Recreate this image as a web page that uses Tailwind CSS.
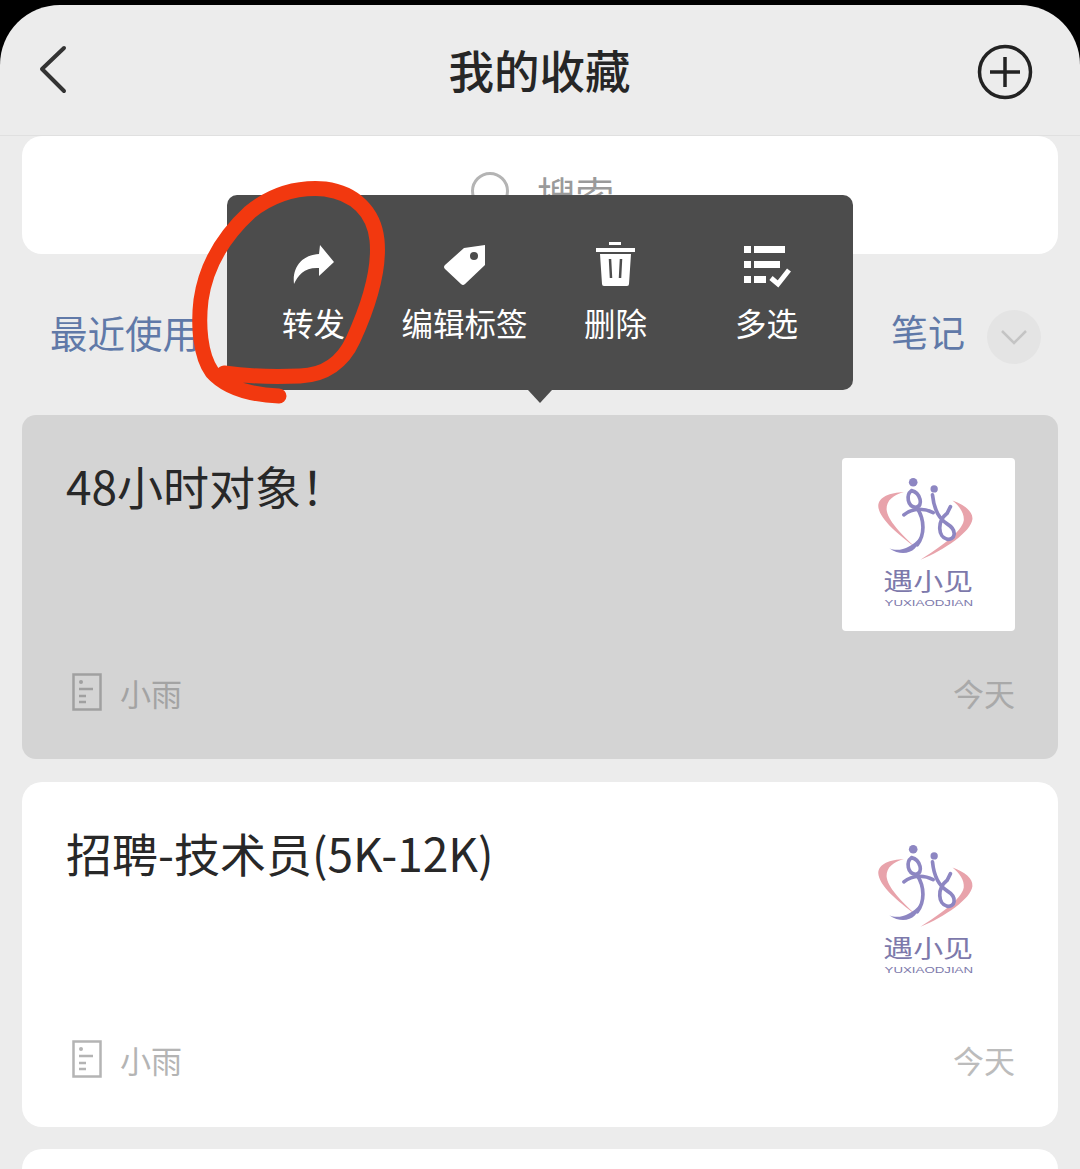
<!DOCTYPE html>
<html lang="zh-CN">

<head>
  <meta charset="UTF-8" />
  <title>我的收藏</title>
  <script src="https://cdn.jsdelivr.net/npm/@tailwindcss/browser@4"></script>
</head>

<body class="bg-black font-['Noto_Sans_CJK_SC','Noto_Sans',sans-serif]">
  <div class="relative w-[1080px] h-[1169px] overflow-hidden bg-black pt-[5px]">
    <div class="h-[1164px] rounded-t-[60px] bg-[#ececec] overflow-hidden">

      <!-- header -->
      <header class="h-[131px] grid grid-cols-[1fr_auto_1fr] items-center pl-[38px] pr-[47px] border-b border-[#e0e0e0]">
        <svg class="w-[32px] h-[50px]" viewBox="0 0 32 50" fill="none" stroke="#333" stroke-width="4" stroke-linecap="round" stroke-linejoin="round">
          <path d="M26 3 L4 24 L26 46" />
        </svg>
        <h1 class="text-[45.5px] leading-none font-medium text-[#262626] translate-x-[4px]">我的收藏</h1>
        <svg class="w-[56px] h-[56px] justify-self-end mt-[3px]" viewBox="0 0 56 56" fill="none" stroke="#222" stroke-width="3.5">
          <circle cx="28" cy="28" r="25.5" />
          <path d="M13 28 H43 M28 13 V43" />
        </svg>
      </header>

      <main class="px-[22px]">
        <!-- search -->
        <div class="h-[118px] bg-white rounded-[20px] flex justify-center gap-[28px] pt-[32px] pl-[5px]">
          <div class="w-[38px] h-[38px] rounded-full border-[3px] border-[#b4b4b4] mt-[4px]"></div>
          <span class="text-[38.5px] leading-[50px] text-[#9a9a9a]">搜索</span>
        </div>

        <!-- tabs -->
        <div class="h-[161px] flex items-center justify-between pl-[28px] pr-[17px] pt-[4px]">
          <span class="text-[37.5px] leading-none text-[#6079a8] mb-[10px]">最近使用</span>
          <div class="flex items-center gap-[22px]">
            <span class="text-[37px] leading-none text-[#6079a8] mb-[10px]">笔记</span>
            <div class="w-[54px] h-[54px] rounded-full bg-[#e4e4e4] flex items-center justify-center">
              <svg class="w-[30px] h-[18px]" viewBox="0 0 30 18" fill="none" stroke="#c4c4c4" stroke-width="2.5">
                <path d="M3 3 L15 15 L27 3" />
              </svg>
            </div>
          </div>
        </div>

        <!-- card 1 (pressed) -->
        <article class="h-[344px] rounded-[14px] bg-[#d4d4d4] pt-[43px] pl-[44px] pr-[43px] mb-[23px]">
          <div class="h-[173px] flex justify-between">
            <h2 class="text-[46px] leading-[54px] text-[#282828]">48小时对象！</h2>
            <div class="w-[173px] h-[173px] bg-white rounded-[4px]">
              <svg class="w-full h-full" viewBox="36 24 520 520">
                <path d="M222 126 C180 128 146 140 145 168 C146 205 205 255 257 292 C215 255 172 210 170 178 C170 150 190 136 222 126Z" fill="#e8a3ab" />
                <path d="M368 152 C405 165 430 185 428 208 C424 245 345 300 272 330 C325 295 395 250 402 212 C404 190 390 170 368 152Z" fill="#e8a3ab" />
                <circle cx="250" cy="97" r="13" fill="#8d86c2" />
                <circle cx="313" cy="117" r="11" fill="#8d86c2" />
                <g fill="none" stroke="#8d86c2" stroke-width="11" stroke-linecap="round">
                  <path d="M245 122 C228 135 232 170 258 172 C282 170 272 128 245 122Z" />
                  <path d="M222 195 C250 172 285 175 310 188" />
                  <path d="M262 175 C285 210 285 255 262 285" />
                  <path d="M308 135 C312 175 325 205 352 222 C385 242 375 272 352 268 C325 262 320 215 352 190 L362 170" />
                </g>
                <path d="M178 295 C205 308 245 295 270 262 C268 300 225 328 178 295Z" fill="#8d86c2" />
                <text x="295" y="422" text-anchor="middle" font-size="72" textLength="270" lengthAdjust="spacingAndGlyphs" fill="#7d79ab">遇小见</text>
                <text x="297" y="470" text-anchor="middle" font-size="29" textLength="266" lengthAdjust="spacingAndGlyphs" fill="#7d79ab" font-family="Liberation Sans">YUXIAODJIAN</text>
              </svg>
            </div>
          </div>
          <div class="mt-[42px] flex items-center justify-between">
            <div class="flex items-center gap-[18px] pl-[6px]">
              <svg class="w-[30px] h-[38px]" viewBox="0 0 30 38" fill="none" stroke="#a0a0a0" stroke-width="2.5">
                <rect x="1.5" y="1.5" width="27" height="35" />
                <circle cx="9" cy="9" r="2" fill="#a0a0a0" stroke="none" />
                <path d="M7 16 H21 M7 23 H14 M7 29 H14" />
              </svg>
              <span class="text-[31px] leading-none text-[#a3a3a3]">小雨</span>
            </div>
            <span class="text-[31px] leading-none text-[#a9a9a9]">今天</span>
          </div>
        </article>

        <!-- card 2 -->
        <article class="h-[345px] rounded-[20px] bg-white pt-[43px] pl-[44px] pr-[43px] mb-[22px]">
          <div class="h-[173px] flex justify-between">
            <h2 class="text-[46px] leading-[54px] text-[#282828]">招聘-技术员(5K-12K)</h2>
            <div class="w-[173px] h-[173px] bg-white">
              <svg class="w-full h-full" viewBox="36 24 520 520">
                <path d="M222 126 C180 128 146 140 145 168 C146 205 205 255 257 292 C215 255 172 210 170 178 C170 150 190 136 222 126Z" fill="#e8a3ab" />
                <path d="M368 152 C405 165 430 185 428 208 C424 245 345 300 272 330 C325 295 395 250 402 212 C404 190 390 170 368 152Z" fill="#e8a3ab" />
                <circle cx="250" cy="97" r="13" fill="#8d86c2" />
                <circle cx="313" cy="117" r="11" fill="#8d86c2" />
                <g fill="none" stroke="#8d86c2" stroke-width="11" stroke-linecap="round">
                  <path d="M245 122 C228 135 232 170 258 172 C282 170 272 128 245 122Z" />
                  <path d="M222 195 C250 172 285 175 310 188" />
                  <path d="M262 175 C285 210 285 255 262 285" />
                  <path d="M308 135 C312 175 325 205 352 222 C385 242 375 272 352 268 C325 262 320 215 352 190 L362 170" />
                </g>
                <path d="M178 295 C205 308 245 295 270 262 C268 300 225 328 178 295Z" fill="#8d86c2" />
                <text x="295" y="422" text-anchor="middle" font-size="72" textLength="270" lengthAdjust="spacingAndGlyphs" fill="#7d79ab">遇小见</text>
                <text x="297" y="470" text-anchor="middle" font-size="29" textLength="266" lengthAdjust="spacingAndGlyphs" fill="#7d79ab" font-family="Liberation Sans">YUXIAODJIAN</text>
              </svg>
            </div>
          </div>
          <div class="mt-[42px] flex items-center justify-between">
            <div class="flex items-center gap-[18px] pl-[6px]">
              <svg class="w-[30px] h-[38px]" viewBox="0 0 30 38" fill="none" stroke="#b4b4b4" stroke-width="2.5">
                <rect x="1.5" y="1.5" width="27" height="35" />
                <circle cx="9" cy="9" r="2" fill="#b4b4b4" stroke="none" />
                <path d="M7 16 H21 M7 23 H14 M7 29 H14" />
              </svg>
              <span class="text-[31px] leading-none text-[#b4b4b4]">小雨</span>
            </div>
            <span class="text-[31px] leading-none text-[#bcbcbc]">今天</span>
          </div>
        </article>

        <!-- card 3, cut off by the screen edge -->
        <article class="h-[200px] rounded-[20px] bg-white"></article>
      </main>
    </div>

    <!-- long-press menu -->
    <div class="absolute left-[227px] top-[195px] w-[626px] h-[195px] rounded-[10px] bg-[#4c4c4c] pl-[11px] grid grid-cols-[repeat(4,151px)] text-white">
      <div class="flex flex-col items-center pt-[46px]">
        <svg class="w-[48px] h-[48px]" viewBox="290 242 48 48" fill="#fff">
          <path d="M320 246 L334 263 L319 277 L319 269 C305 268 298 276 294 285 C292 268 302 256 319 255 Z" />
        </svg>
        <span class="text-[31.5px] leading-none mt-[18px]">转发</span>
      </div>
      <div class="flex flex-col items-center pt-[46px]">
        <svg class="w-[48px] h-[48px]" viewBox="441 242 48 48" fill="#fff">
          <path d="M445 266 L464 249 L485 246 L485 266 L465 285 Q463 287 461 285 L445 270 Q443 268 445 266 Z" />
          <circle cx="474" cy="257" r="4" fill="#4c4c4c" />
        </svg>
        <span class="text-[31.5px] leading-none mt-[18px]">编辑标签</span>
      </div>
      <div class="flex flex-col items-center pt-[46px]">
        <svg class="w-[48px] h-[48px]" viewBox="592 242 48 48" fill="#fff">
          <rect x="609" y="243" width="12" height="3" />
          <rect x="596" y="249" width="39" height="4" />
          <path d="M600 255 H631 L629 285 Q629 287 627 287 H604 Q602 287 602 285 Z" />
          <path d="M610 260 L611 279 M621 260 L620 279" stroke="#4c4c4c" stroke-width="2.5" />
        </svg>
        <span class="text-[31.5px] leading-none mt-[18px]">删除</span>
      </div>
      <div class="flex flex-col items-center pt-[46px]">
        <svg class="w-[48px] h-[48px]" viewBox="743 242 48 48" fill="#fff">
          <rect x="744" y="247" width="7" height="7" />
          <rect x="754" y="247" width="31" height="7" />
          <rect x="744" y="262" width="7" height="7" />
          <rect x="754" y="262" width="26" height="7" />
          <rect x="744" y="277" width="7" height="7" />
          <rect x="754" y="277" width="12" height="7" />
          <path d="M771 279 L778 285 L789 271" fill="none" stroke="#fff" stroke-width="5" />
        </svg>
        <span class="text-[31.5px] leading-none mt-[18px]">多选</span>
      </div>
      <div class="absolute left-[301px] bottom-[-13px] w-0 h-0 border-l-[12px] border-r-[12px] border-t-[13px] border-l-transparent border-r-transparent border-t-[#4c4c4c]"></div>
    </div>

    <!-- red marker circle drawn over the screenshot -->
    <svg class="absolute left-0 top-0 w-[1080px] h-[1169px] pointer-events-none" viewBox="0 0 1080 1169" fill="none" stroke="#f2380f" stroke-width="15" stroke-linecap="round" stroke-linejoin="round">
      <path d="M279 396 C255 395 228 390 212 372 C200 355 198 325 201 300 C206 265 225 235 250 212 C275 192 300 187 325 189 C355 193 374 212 377 240 C380 270 369 305 353 340 C343 362 325 375 300 376 C275 377 245 376 224 373" />
    </svg>
  </div>
</body>

</html>
